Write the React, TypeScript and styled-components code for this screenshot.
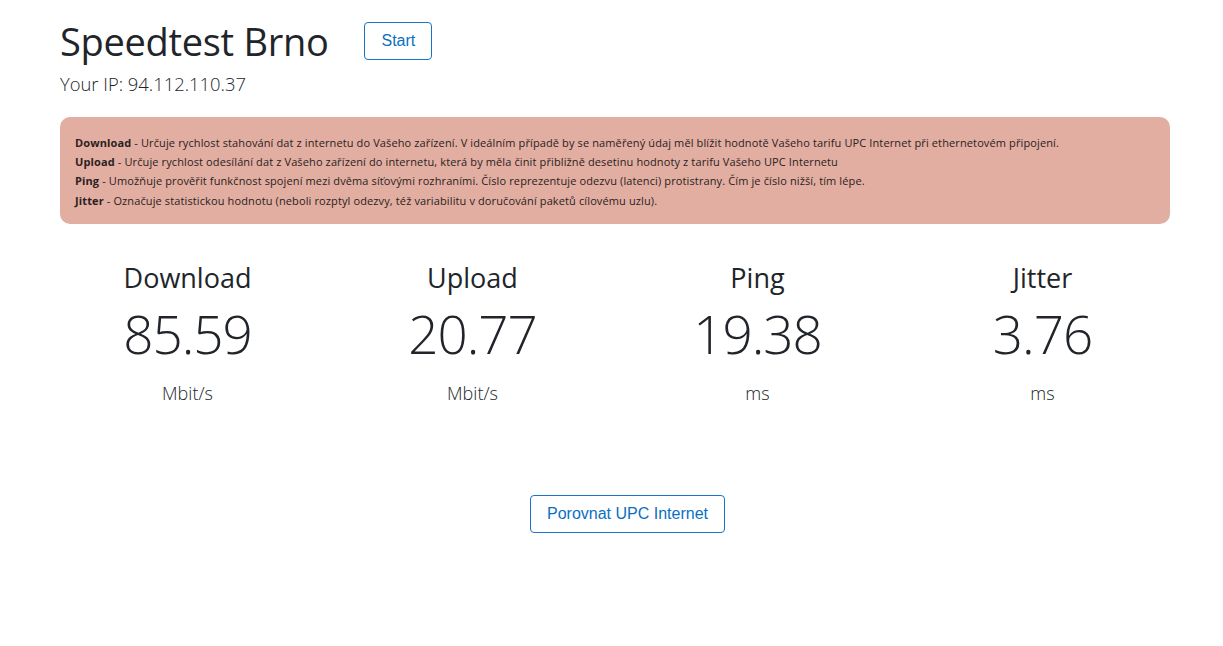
import styled, { createGlobalStyle } from "styled-components";

const GlobalStyle = createGlobalStyle`
  body {
    margin: 0;
    background: #fff;
    color: #212529;
    font-family: "Open Sans", "Noto Sans", sans-serif;
  }
`;

const Page = styled.div`
  width: 1110px;
  margin-left: 60px;
  padding-top: 16px;
`;

const Header = styled.header`
  display: flex;
  align-items: center;
  gap: 36px;
  height: 50px;
`;

const Title = styled.h1`
  margin: 0;
  font-size: 38px;
  font-weight: 400;
  letter-spacing: -0.3px;
  line-height: 50px;
`;

const OutlineButton = styled.button`
  font-family: "Liberation Sans", Arial, sans-serif;
  font-size: 16px;
  color: #0a6fc2;
  background: #fff;
  border: 1px solid #1a73c4;
  border-radius: 4px;
  height: 38px;
  padding: 0 16px;
  cursor: pointer;
`;

const Ip = styled.div`
  margin-top: 6px;
  font-size: 18.4px;
  font-weight: 300;
  line-height: 24px;
`;

const Alert = styled.div`
  margin-top: 21px;
  background: #e2aea2;
  border-radius: 10px;
  padding: 16px 15px 14px;
  font-size: 11px;
  letter-spacing: 0.12px;
  line-height: 19.2px;
  color: #2a2220;
`;

const Line = styled.div`
  white-space: nowrap;
  b {
    font-weight: 700;
  }
`;

const Stats = styled.div`
  display: grid;
  grid-template-columns: repeat(4, 285px);
  margin: 36px -15px 0;
`;

const Stat = styled.div`
  display: flex;
  flex-direction: column;
  align-items: center;
`;

const Label = styled.div`
  font-size: 27px;
  line-height: 36px;
`;

const Value = styled.div`
  margin-top: 8px;
  font-size: 53px;
  font-weight: 300;
  line-height: 60px;
  letter-spacing: -1px;
`;

const Unit = styled.div`
  margin-top: 14px;
  font-size: 18px;
  font-weight: 300;
  line-height: 30px;
`;

const Footer = styled.div`
  display: flex;
  justify-content: center;
  padding-left: 25px;
  margin-top: 87px;
`;

const stats = [
  { label: "Download", value: "85.59", unit: "Mbit/s" },
  { label: "Upload", value: "20.77", unit: "Mbit/s" },
  { label: "Ping", value: "19.38", unit: "ms" },
  { label: "Jitter", value: "3.76", unit: "ms" },
];

export default function App() {
  return (
    <>
      <GlobalStyle />
      <Page>
        <Header>
          <Title>Speedtest Brno</Title>
          <OutlineButton>Start</OutlineButton>
        </Header>
        <Ip>Your IP: 94.112.110.37</Ip>
        <Alert>
          <Line>
            <b>Download</b> - Určuje rychlost stahování dat z internetu do Vašeho zařízení. V ideálním případě by se naměřený údaj měl blížit hodnotě Vašeho tarifu UPC Internet při ethernetovém připojení.
          </Line>
          <Line>
            <b>Upload</b> - Určuje rychlost odesílání dat z Vašeho zařízení do internetu, která by měla činit přibližně desetinu hodnoty z tarifu Vašeho UPC Internetu
          </Line>
          <Line>
            <b>Ping</b> - Umožňuje prověřit funkčnost spojení mezi dvěma síťovými rozhraními. Číslo reprezentuje odezvu (latenci) protistrany. Čím je číslo nižší, tím lépe.
          </Line>
          <Line>
            <b>Jitter</b> - Označuje statistickou hodnotu (neboli rozptyl odezvy, též variabilitu v doručování paketů cílovému uzlu).
          </Line>
        </Alert>
        <Stats>
          {stats.map((s) => (
            <Stat key={s.label}>
              <Label>{s.label}</Label>
              <Value>{s.value}</Value>
              <Unit>{s.unit}</Unit>
            </Stat>
          ))}
        </Stats>
        <Footer>
          <OutlineButton>Porovnat UPC Internet</OutlineButton>
        </Footer>
      </Page>
    </>
  );
}
